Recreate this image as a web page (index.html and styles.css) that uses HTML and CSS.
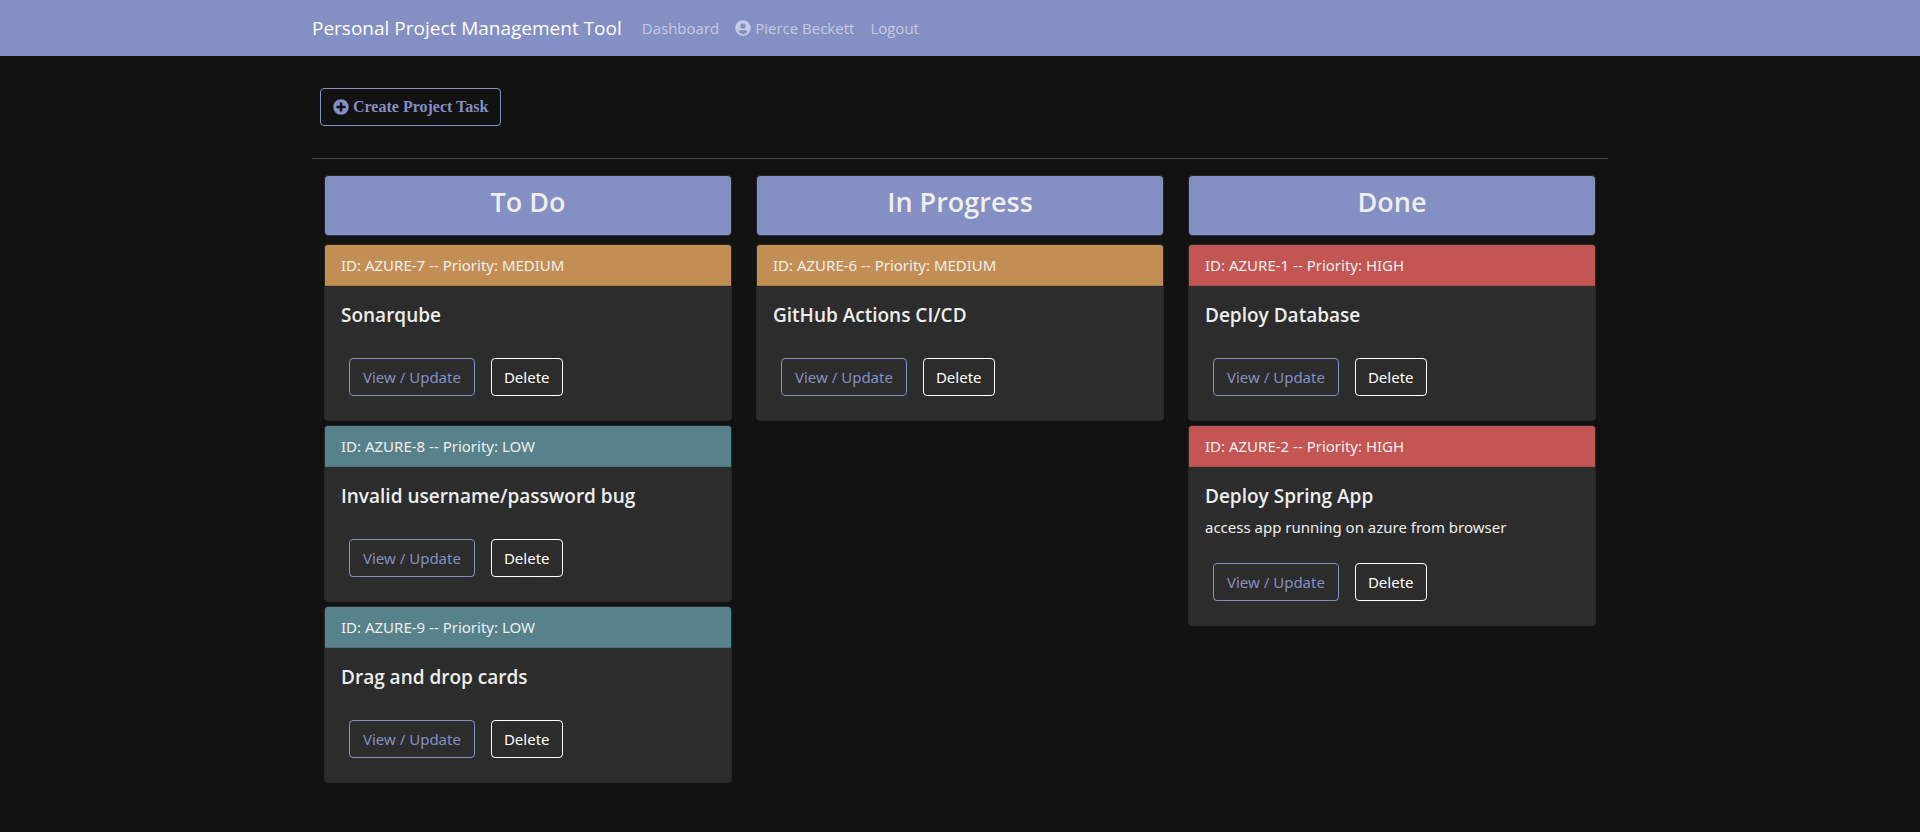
FILE: index.html
```html
<!DOCTYPE html>
<html lang="en">
<head>
<meta charset="utf-8">
<meta name="viewport" content="width=device-width, initial-scale=1">
<title>Personal Project Management Tool</title>
<link rel="stylesheet" href="styles.css">
</head>
<body>
<header class="navbar">
  <nav class="container navbar-inner">
    <a class="brand" href="#">Personal Project Management Tool</a>
    <a class="nav-link" href="#">Dashboard</a>
    <a class="nav-link" href="#"><svg class="icon" viewBox="0 0 496 512" aria-hidden="true"><path fill="currentColor" d="M248 8C111 8 0 119 0 256s111 248 248 248 248-111 248-248S385 8 248 8zm0 96c48.600 0 88 39.400 88 88s-39.400 88-88 88-88-39.400-88-88 39.400-88 88-88zm0 344c-58.700 0-111.300-26.600-146.500-68.200 18.800-35.400 55.600-59.800 98.500-59.800 2.400 0 4.800.4 7.100 1.100 13 4.200 26.600 6.900 40.900 6.900s28-2.700 40.900-6.900c2.300-.7 4.700-1.100 7.100-1.100 42.900 0 79.700 24.400 98.500 59.800C359.300 421.400 306.700 448 248 448z"/></svg><span>Pierce Beckett</span></a>
    <a class="nav-link" href="#">Logout</a>
  </nav>
</header>
<main class="container">
  <div class="toolbar">
    <a class="btn btn-create" href="#"><svg class="icon" viewBox="0 0 512 512" aria-hidden="true"><path fill="currentColor" d="M256 8C119 8 8 119 8 256s111 248 248 248 248-111 248-248S393 8 256 8zm144 276c0 6.600-5.400 12-12 12h-92v92c0 6.600-5.400 12-12 12h-56c-6.600 0-12-5.400-12-12v-92h-92c-6.600 0-12-5.400-12-12v-56c0-6.600 5.400-12 12-12h92v-92c0-6.600 5.400-12 12-12h56c6.600 0 12 5.400 12 12v92h92c6.600 0 12 5.400 12 12v56z"/></svg><span>Create Project Task</span></a>
  </div>
  <hr class="divider">
  <div class="board">
    <section class="column">
      <h3 class="column-title">To Do</h3>
      <article class="card">
        <div class="card-header medium">ID: AZURE-7 -- Priority: MEDIUM</div>
        <div class="card-body">
          <h5 class="card-title">Sonarqube</h5>
          <div class="actions"><a class="btn btn-view" href="#">View / Update</a><button class="btn btn-delete" type="button">Delete</button></div>
        </div>
      </article>
      <article class="card">
        <div class="card-header low">ID: AZURE-8 -- Priority: LOW</div>
        <div class="card-body">
          <h5 class="card-title">Invalid username/password bug</h5>
          <div class="actions"><a class="btn btn-view" href="#">View / Update</a><button class="btn btn-delete" type="button">Delete</button></div>
        </div>
      </article>
      <article class="card">
        <div class="card-header low">ID: AZURE-9 -- Priority: LOW</div>
        <div class="card-body">
          <h5 class="card-title">Drag and drop cards</h5>
          <div class="actions"><a class="btn btn-view" href="#">View / Update</a><button class="btn btn-delete" type="button">Delete</button></div>
        </div>
      </article>
    </section>
    <section class="column">
      <h3 class="column-title">In Progress</h3>
      <article class="card">
        <div class="card-header medium">ID: AZURE-6 -- Priority: MEDIUM</div>
        <div class="card-body">
          <h5 class="card-title">GitHub Actions CI/CD</h5>
          <div class="actions"><a class="btn btn-view" href="#">View / Update</a><button class="btn btn-delete" type="button">Delete</button></div>
        </div>
      </article>
    </section>
    <section class="column">
      <h3 class="column-title">Done</h3>
      <article class="card">
        <div class="card-header high">ID: AZURE-1 -- Priority: HIGH</div>
        <div class="card-body">
          <h5 class="card-title">Deploy Database</h5>
          <div class="actions"><a class="btn btn-view" href="#">View / Update</a><button class="btn btn-delete" type="button">Delete</button></div>
        </div>
      </article>
      <article class="card">
        <div class="card-header high">ID: AZURE-2 -- Priority: HIGH</div>
        <div class="card-body">
          <h5 class="card-title">Deploy Spring App</h5>
          <p class="card-text">access app running on azure from browser</p>
          <div class="actions"><a class="btn btn-view" href="#">View / Update</a><button class="btn btn-delete" type="button">Delete</button></div>
        </div>
      </article>
    </section>
  </div>
</main>
</body>
</html>
```
FILE: styles.css
```css
* { box-sizing: border-box; }

body {
  margin: 0;
  background: #121212;
  color: #eeeeee;
  font-family: "Segoe UI", "Noto Sans", sans-serif;
  font-size: 15px;
  line-height: 24px;
}

a { color: inherit; text-decoration: none; }

.container {
  width: 100%;
  max-width: 1320px;
  margin: 0 auto;
  padding: 0 12px;
}

.navbar {
  background: #848fc3;
  font-family: "Segoe UI", "Open Sans", sans-serif;
}

.navbar-inner {
  display: flex;
  align-items: center;
  min-height: 56px;
}

.brand {
  margin-right: 12px;
  color: #ffffff;
  font-size: 19px;
  line-height: 30px;
}

.nav-link {
  display: flex;
  align-items: center;
  gap: 4px;
  padding: 8px;
  color: rgba(255, 255, 255, 0.55);
}

.icon { width: 16px; height: 16px; flex: none; }

.toolbar { padding: 32px 8px; display: flex; }

.btn {
  display: inline-flex;
  align-items: center;
  justify-content: center;
  gap: 4px;
  padding: 6px 12px;
  border: 1px solid currentColor;
  border-radius: 4px;
  background: transparent;
  font: inherit;
  cursor: pointer;
}

.btn-create {
  color: #848fc3;
  font-family: "Liberation Serif", serif;
  font-size: 16px;
  font-weight: 700;
}

.btn-view { padding: 6px 13px; color: #848fc3; }
.btn-delete { color: #ffffff; }

.divider {
  height: 1px;
  margin: 0 0 16px;
  border: 0;
  background: #494949;
}

.board {
  display: grid;
  grid-template-columns: repeat(3, minmax(0, 1fr));
  align-items: start;
  gap: 24px;
  padding: 0 12px;
}

.column { display: flex; flex-direction: column; gap: 4px; }

.column-title {
  margin: 0 0 4px;
  padding: 10px 16px 17px;
  border: 1px solid #272727;
  border-bottom-color: #343750;
  border-radius: 4px;
  background: #848fc3;
  background-clip: padding-box;
  font-family: "Segoe UI", "Open Sans", sans-serif;
  font-size: 27px;
  font-weight: 600;
  line-height: 32px;
  text-align: center;
}

.card {
  overflow: hidden;
  border: 1px solid #272727;
  border-radius: 4px;
  background: #2c2c2c;
}

.card-header {
  padding: 8px 16px;
  border-bottom: 1px solid rgba(0, 0, 0, 0.125);
}

.medium { background: #c38e53; }
.low { background: #58828b; }
.high { background: #c35653; }

.card-body { padding: 16px; }

.card-title {
  margin: 0;
  padding: 1px 0 7px;
  font-family: "Segoe UI", "Open Sans", sans-serif;
  font-size: 19px;
  font-weight: 600;
  line-height: 24px;
}

.card-text { margin: 0; }

.actions {
  display: flex;
  flex-wrap: wrap;
  gap: 16px;
  padding: 24px 8px 8px;
}
```
